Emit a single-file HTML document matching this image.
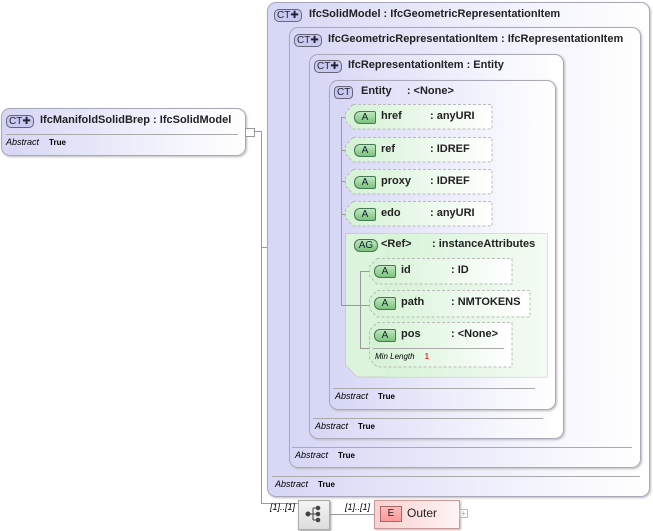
<!DOCTYPE html>
<html><head><style>
body{margin:0;width:653px;height:531px;position:relative;background:#fff;font-family:"Liberation Sans",sans-serif;overflow:hidden}
.b{position:absolute;border:1px solid #a8a8b8;border-radius:9px;box-shadow:1px 1px 2px #bbb}
.ct{background:linear-gradient(to right,#d6d6f6,#f4f4fd 70%,#fff)}
.t{position:absolute;font-size:11px;font-weight:bold;color:#222;white-space:nowrap}
.tag{position:absolute;font-size:10px;color:#223;border:1px solid #667;border-radius:5px;background:#c8c8f0;padding:0 2px;line-height:11px;height:11px}
.ab{position:absolute;font-size:9px;white-space:nowrap}
.ab i{margin-right:10px}
.ab b{font-size:8px}
.hl{position:absolute;height:1px;background:#999}
.vl{position:absolute;width:1px;background:#999}
svg.at{position:absolute;overflow:visible}
.A{position:absolute;font-size:10px;border:1px solid #475;border-radius:6px 2px 2px 6px;background:linear-gradient(#bfe8bf,#7cc27c);width:20px;text-align:center;line-height:11px;height:11px;color:#123}
</style></head><body>
<svg width="0" height="0" style="position:absolute"><defs><linearGradient id="g" x1="0" x2="1"><stop offset="0" stop-color="#d4f2d4"/><stop offset="1" stop-color="#fff"/></linearGradient></defs></svg>
<div class="b ct" style="left:1px;top:108px;width:243px;height:46px"></div>
<div class="tag" style="left:6px;top:115px">CT✚</div>
<div class="t" style="left:40px;top:114px">IfcManifoldSolidBrep : IfcSolidModel</div>
<div class="hl" style="left:6px;top:134px;width:232px;background:#aaa"></div>
<div class="ab" style="left:6px;top:137px"><i>Abstract</i><b>True</b></div>
<div style="position:absolute;left:245px;top:128px;width:8px;height:7px;border:1px solid #999;background:#fff"></div>
<div class="hl" style="left:254px;top:131px;width:8px"></div>
<div class="vl" style="left:261px;top:131px;height:373px"></div>
<div class="hl" style="left:261px;top:247px;width:84px"></div>
<div class="hl" style="left:261px;top:503px;width:37px"></div>

<div class="b ct" style="left:267px;top:2px;width:381px;height:493px"></div>
<div class="tag" style="left:274px;top:9px">CT✚</div>
<div class="t" style="left:309px;top:8px">IfcSolidModel : IfcGeometricRepresentationItem</div>
<div class="hl" style="left:272px;top:476px;width:368px;background:#aaa"></div>
<div class="ab" style="left:275px;top:479px"><i>Abstract</i><b>True</b></div>

<div class="b ct" style="left:289px;top:27px;width:350px;height:439px"></div>
<div class="tag" style="left:294px;top:34px">CT✚</div>
<div class="t" style="left:328px;top:33px">IfcGeometricRepresentationItem : IfcRepresentationItem</div>
<div class="hl" style="left:292px;top:447px;width:340px;background:#aaa"></div>
<div class="ab" style="left:295px;top:450px"><i>Abstract</i><b>True</b></div>

<div class="b ct" style="left:309px;top:54px;width:253px;height:383px"></div>
<div class="tag" style="left:314px;top:60px">CT✚</div>
<div class="t" style="left:348px;top:59px">IfcRepresentationItem : Entity</div>
<div class="hl" style="left:313px;top:418px;width:230px;background:#aaa"></div>
<div class="ab" style="left:315px;top:421px"><i>Abstract</i><b>True</b></div>

<div class="b ct" style="left:329px;top:80px;width:225px;height:328px"></div>
<div class="tag" style="left:334px;top:86px;border-radius:4px">CT</div>
<div class="t" style="left:361px;top:85px">Entity&nbsp;&nbsp;&nbsp;&nbsp; : &lt;None&gt;</div>
<div class="hl" style="left:333px;top:388px;width:202px;background:#aaa"></div>
<div class="ab" style="left:335px;top:391px"><i>Abstract</i><b>True</b></div>

<div class="vl" style="left:341px;top:117px;height:131px"></div>
<div class="hl" style="left:341px;top:117px;width:5px"></div>
<div class="hl" style="left:341px;top:150px;width:5px"></div>
<div class="hl" style="left:341px;top:181px;width:5px"></div>
<div class="hl" style="left:341px;top:214px;width:5px"></div>

<svg class="at" style="left:345px;top:104px" width="148" height="26"><polygon points="8,0.5 147,0.5 147,25 8,25 0.5,17 0.5,8.5" fill="url(#g)" stroke="#bbb" stroke-dasharray="3,2"/></svg>
<div class="A" style="left:354px;top:111px">A</div><div class="t" style="left:381px;top:110px">href</div><div class="t" style="left:430px;top:110px">: anyURI</div>
<svg class="at" style="left:345px;top:137px" width="148" height="26"><polygon points="8,0.5 147,0.5 147,25 8,25 0.5,17 0.5,8.5" fill="url(#g)" stroke="#bbb" stroke-dasharray="3,2"/></svg>
<div class="A" style="left:354px;top:144px">A</div><div class="t" style="left:381px;top:143px">ref</div><div class="t" style="left:430px;top:143px">: IDREF</div>
<svg class="at" style="left:345px;top:169px" width="148" height="26"><polygon points="8,0.5 147,0.5 147,25 8,25 0.5,17 0.5,8.5" fill="url(#g)" stroke="#bbb" stroke-dasharray="3,2"/></svg>
<div class="A" style="left:354px;top:176px">A</div><div class="t" style="left:381px;top:175px">proxy</div><div class="t" style="left:430px;top:175px">: IDREF</div>
<svg class="at" style="left:345px;top:201px" width="148" height="26"><polygon points="8,0.5 147,0.5 147,25 8,25 0.5,17 0.5,8.5" fill="url(#g)" stroke="#bbb" stroke-dasharray="3,2"/></svg>
<div class="A" style="left:354px;top:208px">A</div><div class="t" style="left:381px;top:207px">edo</div><div class="t" style="left:430px;top:207px">: anyURI</div>

<svg class="at" style="left:345px;top:233px" width="204" height="146"><polygon points="0.5,0.5 202,0.5 202,144 12,144 0.5,132" fill="#dcf4dc" stroke="#ccc"/><polygon points="40,0.5 202,0.5 202,144 40,144" fill="url(#g)" opacity="0.7"/></svg>
<div class="A" style="left:354px;top:239px;border-radius:6px;width:22px">AG</div>
<div class="t" style="left:381px;top:238px">&lt;Ref&gt;</div><div class="t" style="left:432px;top:238px">: instanceAttributes</div>
<div class="vl" style="left:360px;top:271px;height:77px"></div>
<div class="hl" style="left:341px;top:305px;width:30px"></div>
<div class="vl" style="left:341px;top:247px;height:58px"></div>
<div class="hl" style="left:360px;top:271px;width:10px"></div>
<div class="hl" style="left:360px;top:348px;width:10px"></div>

<svg class="at" style="left:369px;top:258px" width="144" height="27"><polygon points="8,0.5 143,0.5 143,26 8,26 0.5,18 0.5,8.5" fill="url(#g)" stroke="#bbb" stroke-dasharray="3,2"/></svg>
<div class="A" style="left:374px;top:265px">A</div><div class="t" style="left:401px;top:264px">id</div><div class="t" style="left:451px;top:264px">: ID</div>
<svg class="at" style="left:369px;top:290px" width="162" height="28"><polygon points="8,0.5 161,0.5 161,27 8,27 0.5,19 0.5,8.5" fill="url(#g)" stroke="#bbb" stroke-dasharray="3,2"/></svg>
<div class="A" style="left:374px;top:297px">A</div><div class="t" style="left:401px;top:296px">path</div><div class="t" style="left:451px;top:296px">: NMTOKENS</div>
<svg class="at" style="left:369px;top:322px" width="144" height="46"><polygon points="8,0.5 143,0.5 143,45 8,45 0.5,37 0.5,8.5" fill="url(#g)" stroke="#bbb" stroke-dasharray="3,2"/></svg>
<div class="A" style="left:374px;top:329px">A</div><div class="t" style="left:401px;top:328px">pos</div><div class="t" style="left:451px;top:328px">: &lt;None&gt;</div>
<div class="hl" style="left:373px;top:348px;width:131px;background:#aaa"></div>
<div class="ab" style="left:375px;top:352px;font-size:8px"><i>Min Length</i><b style="color:#e33">1</b></div>

<div class="ab" style="left:270px;top:502px;font-size:9px"><i>[1]..[1]</i></div>
<div style="position:absolute;left:298px;top:500px;width:30px;height:28px;background:linear-gradient(#f4f4f4,#ddd);border:1px solid #aaa;box-shadow:1px 1px 2px #999"></div>
<svg style="position:absolute;left:298px;top:500px" width="32" height="30"><g fill="#444" stroke="#444"><circle cx="10" cy="14" r="2"/><line x1="10" y1="14" x2="15" y2="14"/><line x1="15" y1="8" x2="15" y2="20"/><line x1="15" y1="8" x2="20" y2="8"/><line x1="15" y1="14" x2="20" y2="14"/><line x1="15" y1="20" x2="20" y2="20"/><circle cx="20" cy="8" r="1.8"/><circle cx="20" cy="14" r="1.8"/><circle cx="20" cy="20" r="1.8"/></g></svg>
<div class="hl" style="left:330px;top:514px;width:44px"></div>
<div class="ab" style="left:345px;top:502px;font-size:9px"><i>[1]..[1]</i></div>
<div style="position:absolute;left:374px;top:500px;width:84px;height:27px;background:linear-gradient(to right,#f8d0d0,#fff4f4);border:1px solid #c99;box-shadow:1px 1px 2px #bbb"></div>
<div style="position:absolute;left:380px;top:506px;width:20px;height:14px;border:1px solid #a66;background:linear-gradient(#fbb,#f99);font-size:10px;text-align:center;line-height:14px;color:#222">E</div>
<div class="t" style="left:407px;top:506px;font-weight:normal;font-size:12px">Outer</div>
<div style="position:absolute;left:459px;top:509px;width:7px;height:7px;border:1px solid #bbb;font-size:8px;line-height:7px;text-align:center;color:#aaa">+</div>
</body></html>
